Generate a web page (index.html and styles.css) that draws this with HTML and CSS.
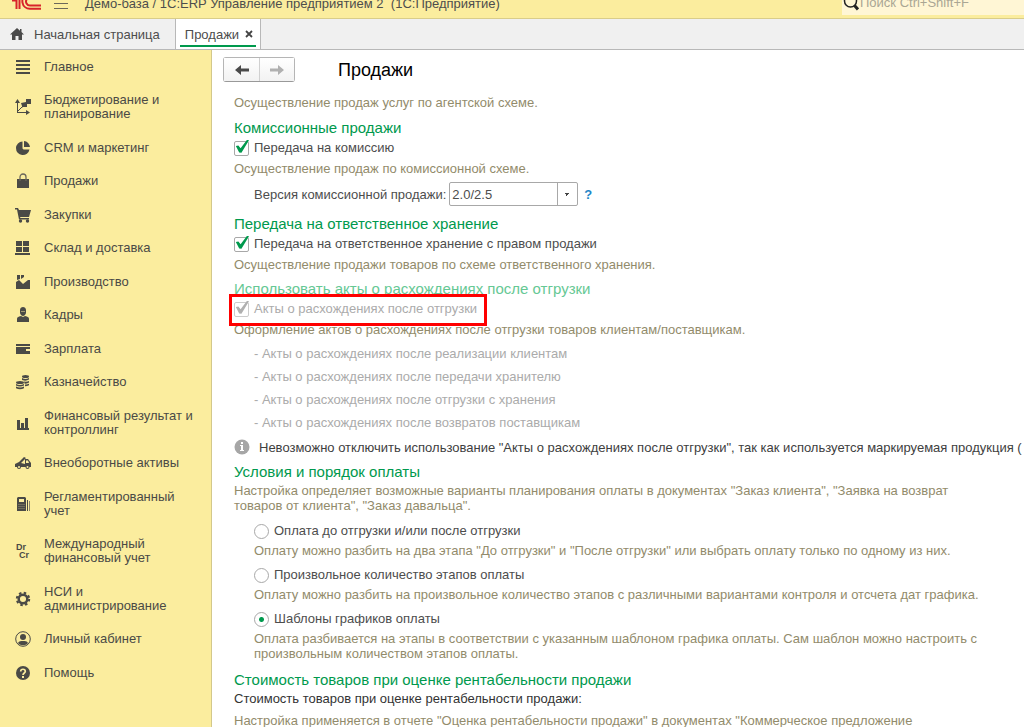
FILE: index.html
```html
<!DOCTYPE html>
<html lang="ru">
<head>
  <meta charset="UTF-8">
  <title>Продажи</title>
  <link rel="stylesheet" href="styles.css">
</head>
<body>
  <header class="topbar">
    <svg class="logo" width="30" height="20" viewBox="0 0 30 20" fill="none" stroke="#d8232a" stroke-width="2">
      <path d="M0 10.500h4M4.500 9.500v9.500M7.500 3v16" />
      <path d="M29 18.800H18a7.500 7.500 0 1 1 6.500-11" />
      <path d="M29 15.500H18a4 4 0 1 1 3.500-6" />
    </svg>
    <button class="menu-button" aria-label="Меню"></button>
    <span class="app-title">Демо-база / 1С:ERP Управление предприятием 2&nbsp; (1С:Предприятие)</span>
    <label class="search">
      <svg width="16" height="18" viewBox="0 0 16 18" fill="none" stroke="#222">
        <circle cx="7.500" cy="8" r="6" stroke-width="1.500" />
        <path d="M11.500 12.500l3.500 4" stroke-width="3" />
      </svg>
      <input type="text" placeholder="Поиск Ctrl+Shift+F" aria-label="Поиск">
    </label>
  </header>

  <nav class="tabs">
    <a class="tab home" href="#">
      <svg width="14" height="12" viewBox="0 0 14 12" fill="#4a4a4a"><path d="M7 0L0 6.500h2V12h3.500V8h3v4H12V6.500h2L11.500 4V1H10v1.700z" /></svg>
      Начальная страница
    </a>
    <div class="tab active">
      <a href="#">Продажи</a>
      <button class="tab-close" aria-label="Закрыть">
        <svg width="8" height="8" viewBox="0 0 8 8" stroke="#444" stroke-width="1.800"><path d="M1 1l6 6M7 1L1 7" /></svg>
      </button>
    </div>
  </nav>

  <div class="layout">
    <aside class="sidebar">
      <ul class="sections">
        <li><a href="#">
          <svg class="icon" viewBox="0 0 16 16"><path d="M1 1h14v2H1zM1 5h14v2H1zM1 9h14v2H1zM1 13h14v2H1z" /></svg>
          Главное</a></li>
        <li><a href="#">
          <svg class="icon" viewBox="0 0 16 16"><path d="M2 3h1v10h9v1H2zM0 4l2.500-4L5 4zM11 11l4 2.500-4 2.500zM6 4l5-1v2l-4 2zM11 0h5v5h-5zM7 4h5v4H7z" /><path d="M3 12l4-4 3-1" fill="none" stroke="#4a4a46" /></svg>
          Бюджетирование и планирование</a></li>
        <li><a href="#">
          <svg class="icon" viewBox="0 0 16 16"><path d="M7.500 1.500A6.800 6.800 0 1 0 14.500 9.500H8.500L7.500 8.500zM9 1v6h6a6.500 6.500 0 0 0-6-6z" /></svg>
          CRM и маркетинг</a></li>
        <li><a href="#">
          <svg class="icon" viewBox="0 0 16 16"><path d="M2 6h12v9H2z" /><path d="M5 8V4a3 3 0 0 1 6 0v4" fill="none" stroke="#6b675a" stroke-width="1.300" /></svg>
          Продажи</a></li>
        <li><a href="#">
          <svg class="icon" viewBox="0 0 16 16"><path d="M0 1h3l1 2h12l-2 7H5l.5 1H14v1.500H4L2 2.500H0z" /><circle cx="5.500" cy="14" r="1.700" /><circle cx="12.500" cy="14" r="1.700" /></svg>
          Закупки</a></li>
        <li><a href="#">
          <svg class="icon" viewBox="0 0 16 16"><path d="M1 1h6v5H1zM8 1h6v5H8zM1 7h6v5H1zM8 7h6v5H8zM0 13h15v2H0z" /></svg>
          Склад и доставка</a></li>
        <li><a href="#">
          <svg class="icon" viewBox="0 0 16 16"><path d="M1 15V8l3-2 4 4 5-4h2v9zM2 1h3v4L2 6zM6 1h3v2L6 5z" /></svg>
          Производство</a></li>
        <li><a href="#">
          <svg class="icon" viewBox="0 0 16 16"><path d="M5 3c0-4 6-4 6 0v3c-1 4-5 4-6 0zM2 15v-3c0-2 1-2 4-3l2 1 2-1c3 1 4 1 4 3v3z" /><path d="M6 4h4v1H6z" fill="#a19a72" /></svg>
          Кадры</a></li>
        <li><a href="#">
          <svg class="icon" viewBox="0 0 16 16"><path d="M1 3h14v2H1zM1 6h14v2h-4v2h4v3H1z" /></svg>
          Зарплата</a></li>
        <li><a href="#">
          <svg class="icon" viewBox="0 0 16 16"><ellipse cx="10.500" cy="2.500" rx="3.500" ry="1.500" /><ellipse cx="5" cy="8.500" rx="4" ry="1.500" /><path d="M7 4q3.500 2 7 0v1.500q-2.500 1.500-5 1L7 6zM9 7.500q3 .5 5-.5v1.500q-2 1.500-4.500 1zM10 10.500q2 .3 4-.7v1.500q-2 1-4 1zM1 10q4 2 8 0v1.500q-4 2-8 0zM1 12.500q4 2 8 0v1.700q-4 2-8 0z" /></svg>
          Казначейство</a></li>
        <li><a href="#">
          <svg class="icon" viewBox="0 0 16 16"><path d="M2 13h12v2H2zM2 5h3v8H2zM6 8h3v5H6zM10 3h3v10h-3z" /></svg>
          Финансовый результат и контроллинг</a></li>
        <li><a href="#">
          <svg class="icon" viewBox="0 0 16 16"><path d="M0 9l4-2 5-5 2 1-5 5 4 1V4h3l3 4v4H0z" /><path d="M11 5.500h2l1 2.500h-3z" fill="#fbed9e" /><circle cx="4" cy="12" r="2" /><circle cx="12.500" cy="12" r="2" /><circle cx="4" cy="12" r="1" fill="#fbed9e" /><circle cx="12.500" cy="12" r="1" fill="#fbed9e" /></svg>
          Внеоборотные активы</a></li>
        <li><a href="#">
          <svg class="icon" viewBox="0 0 16 16"><path d="M3 1h7l1 1v13H2V2zM12 4h1v11h-1z" /><path d="M4 3h5v3H4z" fill="#fbed9e" /><path d="M3 8.500h7M3 10.500h7M3 12.500h7" stroke="#8b866b" stroke-width=".6" /><path d="M14.500 5v10" stroke="#8b866b" /></svg>
          Регламентированный учет</a></li>
        <li><a href="#">
          <svg class="icon" viewBox="0 0 16 16"><text class="icon-text" x="1" y="7">Dr</text><text class="icon-text" x="4" y="15">Cr</text></svg>
          Международный финансовый учет</a></li>
        <li><a href="#">
          <svg class="icon" viewBox="0 0 16 16"><g fill="none" stroke="#4a4a46"><circle cx="8" cy="8" r="4.300" stroke-width="2.500" /><circle cx="8" cy="8" r="6.200" stroke-width="2" stroke-dasharray="2.500 2.370" /></g></svg>
          НСИ и администрирование</a></li>
        <li><a href="#">
          <svg class="icon" viewBox="0 0 16 16"><circle cx="8" cy="8" r="7.300" fill="none" stroke="#4a4a46" /><circle cx="8" cy="6" r="3" /><path d="M3 12c1-2 3-2 5-2s4 0 5 2c-2 3-8 3-10 0z" /></svg>
          Личный кабинет</a></li>
        <li><a href="#">
          <svg class="icon" viewBox="0 0 16 16"><circle cx="8" cy="8" r="7" /><path d="M5.700 6.500c0-3 4.600-3 4.600 0 0 1.500-2.300 1.500-2.300 3.500" fill="none" stroke="#fbed9e" stroke-width="1.700" /><path d="M7 11h2v2H7z" fill="#fbed9e" /></svg>
          Помощь</a></li>
      </ul>
    </aside>

    <main class="content">
      <div class="page-head">
        <div class="history">
          <button aria-label="Назад"><svg width="14" height="10" viewBox="0 0 14 10" fill="#4a4a4a"><path d="M0 5l6-5v3.500h8v3H6V10z" /></svg></button>
          <button aria-label="Вперед" disabled><svg width="14" height="10" viewBox="0 0 14 10" fill="#b0b0b0"><path d="M14 5L8 0v3.500H0v3h8V10z" /></svg></button>
        </div>
        <h1>Продажи</h1>
      </div>

      <p class="hint">Осуществление продаж услуг по агентской схеме.</p>

      <section class="group">
        <h2>Комиссионные продажи</h2>
        <label class="option"><input type="checkbox" checked>Передача на комиссию</label>
        <p class="hint">Осуществление продаж по комиссионной схеме.</p>
        <div class="field">
          <label for="version">Версия комиссионной продажи:</label>
          <select id="version"><option>2.0/2.5</option></select>
          <a class="help" href="#">?</a>
        </div>
      </section>

      <section class="group">
        <h2>Передача на ответственное хранение</h2>
        <label class="option"><input type="checkbox" checked>Передача на ответственное хранение с правом продажи</label>
        <p class="hint">Осуществление продажи товаров по схеме ответственного хранения.</p>
      </section>

      <section class="group">
        <h2 class="muted">Использовать акты о расхождениях после отгрузки</h2>
        <label class="option marked disabled"><input type="checkbox" checked disabled>Акты о расхождениях после отгрузки</label>
        <p class="hint">Оформление актов о расхождениях после отгрузки товаров клиентам/поставщикам.</p>
        <ul class="acts">
          <li>- Акты о расхождениях после реализации клиентам</li>
          <li>- Акты о расхождениях после передачи хранителю</li>
          <li>- Акты о расхождениях после отгрузки с хранения</li>
          <li>- Акты о расхождениях после возвратов поставщикам</li>
        </ul>
        <p class="notice">
          <svg width="16" height="16" viewBox="0 0 16 16"><circle cx="8" cy="8" r="7.500" fill="#a6a6a6" /><path d="M7 3h2v2H7zM6 6h3v5h1v1H6v-1h1V7H6z" fill="#fff" /></svg>
          Невозможно отключить использование "Акты о расхождениях после отгрузки", так как используется маркируемая продукция (
        </p>
      </section>

      <section class="group">
        <h2>Условия и порядок оплаты</h2>
        <p class="hint">Настройка определяет возможные варианты планирования оплаты в документах "Заказ клиента", "Заявка на возврат товаров от клиента", "Заказ давальца".</p>
        <div class="variants">
          <label class="option"><input type="radio" name="payment">Оплата до отгрузки и/или после отгрузки</label>
          <p class="hint">Оплату можно разбить на два этапа "До отгрузки" и "После отгрузки" или выбрать оплату только по одному из них.</p>
          <label class="option"><input type="radio" name="payment">Произвольное количество этапов оплаты</label>
          <p class="hint">Оплату можно разбить на произвольное количество этапов с различными вариантами контроля и отсчета дат графика.</p>
          <label class="option"><input type="radio" name="payment" checked>Шаблоны графиков оплаты</label>
          <p class="hint">Оплата разбивается на этапы в соответствии с указанным шаблоном графика оплаты. Сам шаблон можно настроить с произвольным количеством этапов оплаты.</p>
        </div>
      </section>

      <section class="group">
        <h2>Стоимость товаров при оценке рентабельности продажи</h2>
        <p class="caption">Стоимость товаров при оценке рентабельности продажи:</p>
        <p class="hint after-caption">Настройка применяется в отчете "Оценка рентабельности продажи" в документах "Коммерческое предложение</p>
      </section>
    </main>
  </div>
</body>
</html>
```
FILE: styles.css
```css
* {
  box-sizing: border-box;
}
body {
  margin: 0;
  height: 100vh;
  display: flex;
  flex-direction: column;
  overflow: hidden;
  background: #fff;
  color: #4d4d4d;
  font-family: "Liberation Sans", Arial, sans-serif;
  font-size: 13px;
  line-height: 15px;
}
h1, h2, p, ul {
  margin: 0;
  padding: 0;
  font-weight: normal;
}
ul {
  list-style: none;
}
a {
  color: inherit;
  text-decoration: none;
}
button, input, select {
  font: inherit;
  color: inherit;
}

/* Верхняя панель */
.topbar {
  display: flex;
  align-items: flex-end;
  height: 19px;
  flex-shrink: 0;
  padding-left: 12px;
  background: #fbed9e;
  border-bottom: 1px solid #d9cd8a;
}
.logo {
  margin-bottom: 8px;
}
.menu-button {
  width: 14px;
  height: 12px;
  margin: 0 17px 9px 12px;
  padding: 0;
  border: solid #6b675a;
  border-width: 1px 0;
  background: linear-gradient(#6b675a, #6b675a) center / 100% 1px no-repeat;
}
.app-title {
  padding-bottom: 7px;
}
.search {
  display: flex;
  align-items: flex-end;
  width: 182px;
  margin-left: auto;
  margin-bottom: 3px;
  padding-left: 1px;
  background: #fff6d5;
}
.search svg {
  margin-bottom: 4px;
}
.search input {
  width: 150px;
  height: 20px;
  margin-bottom: 3px;
  padding: 0 1px;
  border: 0;
  background: none;
  outline: none;
}
.search input::placeholder {
  color: #aaa694;
}

/* Вкладки */
.tabs {
  display: flex;
  flex-shrink: 0;
  height: 31px;
  background: #f0f0f0;
  border-bottom: 1px solid #b8b8b8;
}
.tab {
  display: flex;
  align-items: center;
  border-right: 1px solid #b8b8b8;
}
.home {
  gap: 10px;
  padding: 0 15px 0 10px;
}
.active {
  position: relative;
  gap: 6px;
  padding: 0 7px 0 9px;
  background: #fff;
}
.active::after {
  content: "";
  position: absolute;
  left: 4px;
  right: 4px;
  bottom: 2px;
  height: 2px;
  background: #00994d;
}
.tab-close {
  display: flex;
  padding: 0;
  border: 0;
  background: none;
}

.layout {
  display: flex;
  flex: 1;
  min-height: 0;
}

/* Панель разделов */
.sidebar {
  width: 212px;
  flex-shrink: 0;
  background: #fbed9e;
  border-right: 1px solid #d3c88b;
  color: #4a4a46;
}
.sections a {
  display: flex;
  align-items: center;
  gap: 13px;
  padding: 10px 8px 9px 15px;
  line-height: 14px;
}
.sections li:nth-child(even) a {
  padding-bottom: 10px;
}
.icon {
  width: 16px;
  height: 16px;
  margin: -1px 0;
  flex-shrink: 0;
  overflow: visible;
  fill: #4a4a46;
}
.icon-text {
  font-size: 9px;
  font-weight: bold;
}

/* Содержимое */
.content {
  flex: 1;
  min-width: 0;
  padding: 7px 40px 0 22px;
  overflow: hidden;
}
.page-head {
  display: flex;
  align-items: center;
  gap: 43px;
  margin: 0 0 13px -11px;
}
.history {
  display: flex;
  border: 1px solid #b5b5b5;
  border-bottom-color: #999;
  border-radius: 3px;
}
.history button {
  display: flex;
  align-items: center;
  justify-content: center;
  width: 35px;
  height: 23px;
  padding: 0;
  border: 0;
  background: linear-gradient(#fff, #f2f2f2);
}
.history button + button {
  border-left: 1px solid #d0d0d0;
}
h1 {
  color: #000;
  font-size: 18px;
  line-height: 20px;
}
h2 {
  color: #00994d;
  font-size: 15px;
  line-height: 18px;
}
h2.muted {
  color: #66c894;
}
.hint {
  color: #928b6b;
}
h2 + .hint {
  margin-top: 2px;
}
.group {
  margin-top: 9px;
}
.group + .group {
  margin-top: 8px;
}
.option {
  display: flex;
  align-items: center;
  gap: 5px;
  width: fit-content;
  margin: 3px 0 5px;
  line-height: 16px;
}
.option input {
  appearance: none;
  width: 15px;
  height: 15px;
  margin: 0;
  border: 1px solid #a8a8a8;
  background: #fff;
}
.option input[type="checkbox"] {
  border-radius: 2px;
}
.option input[type="checkbox"]:checked::before {
  content: "";
  display: block;
  width: 14px;
  height: 14px;
  margin-top: -2px;
  background: #00994d;
  clip-path: polygon(6% 46%, 24% 42%, 40% 62%, 86% 2%, 100% 6%, 46% 94%, 30% 92%);
}
.option input:disabled {
  border-color: #ccc;
}
.option input[type="checkbox"]:disabled::before {
  background: #b0b0b0;
}
.option input[type="radio"] {
  border-radius: 50%;
}
.option input[type="radio"]:checked {
  background: radial-gradient(circle, #00994d 2px, #fff 3px);
}
.disabled {
  color: #ababab;
}
.marked {
  position: relative;
}
/* Красная рамка поверх соседних строк */
.marked::after {
  content: "";
  position: absolute;
  inset: -7px -10px -9px -5px;
  border: 3px solid #f00;
}
.field {
  display: flex;
  align-items: center;
  gap: 3px;
  margin: 6px 0 0 20px;
}
.field select {
  appearance: none;
  width: 129px;
  height: 24px;
  padding: 0 2px;
  border: 1px solid #a8a8a8;
  border-radius: 2px;
  background:
    linear-gradient(to bottom left, #444 50%, transparent 50%) right 10px center / 3px 3px no-repeat,
    linear-gradient(to bottom right, #444 50%, transparent 50%) right 7px center / 3px 3px no-repeat,
    linear-gradient(#a8a8a8, #a8a8a8) right 19px top / 1px 100% no-repeat,
    #fff;
}
.help {
  margin-left: 3px;
  color: #1e87c8;
  font-weight: bold;
}
.field + .group,
.group:has(.field) + .group {
  margin-top: 9px;
}
.acts {
  margin: 5px 0 0 20px;
  color: #ababab;
  line-height: 23px;
}
.notice {
  display: flex;
  align-items: center;
  gap: 9px;
  margin-top: 5px;
  color: #404040;
  white-space: nowrap;
}
.notice svg {
  flex-shrink: 0;
}
.variants {
  margin: 10px 0 0 20px;
  padding-bottom: 2px;
}
.variants .option {
  margin: 9px 0 4px;
}
.caption {
  margin-top: 2px;
  color: #333;
}
.after-caption {
  margin-top: 7px;
}
```
